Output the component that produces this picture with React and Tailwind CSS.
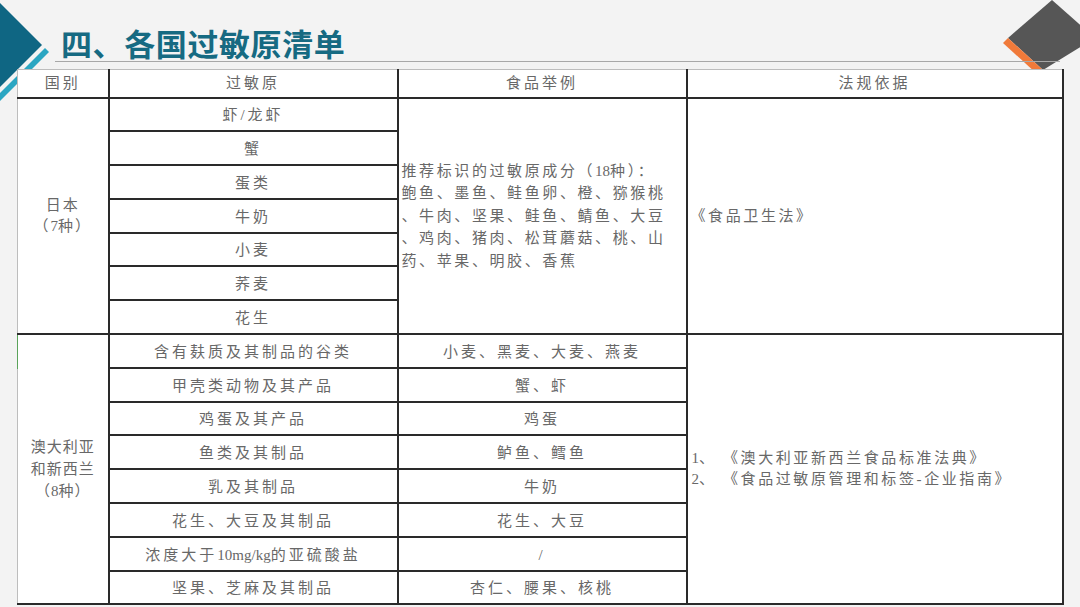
import React from 'react';

const jp = ['虾/龙虾', '蟹', '蛋类', '牛奶', '小麦', '荞麦', '花生'];

const au = [
  ['含有麸质及其制品的谷类', '小麦、黑麦、大麦、燕麦'],
  ['甲壳类动物及其产品', '蟹、虾'],
  ['鸡蛋及其产品', '鸡蛋'],
  ['鱼类及其制品', '鲈鱼、鳕鱼'],
  ['乳及其制品', '牛奶'],
  ['花生、大豆及其制品', '花生、大豆'],
  [<>浓度大于<span className="tracking-normal">10mg/kg</span>的亚硫酸盐</>, '/'],
  ['坚果、芝麻及其制品', '杏仁、腰果、核桃'],
];

const cell = 'border-2 border-[#2a2a2a] text-center align-middle p-0';

export default function App() {
  return (
    <div
      className="relative w-[1080px] h-[607px] overflow-hidden bg-[#f3f3f3]"
      style={{ fontFamily: '"Liberation Serif", "Noto Sans CJK SC", serif' }}
    >
      {/* 左上角装饰 */}
      <svg className="absolute left-0 top-0" width="60" height="110" viewBox="0 0 60 110">
        <polygon points="0,93 45,48 49,52 0,101" fill="#2ba6c2" />
        <polygon points="0,3 42,45 0,87" fill="#0f6683" />
      </svg>
      {/* 右上角装饰 */}
      <svg className="absolute right-0 top-0" width="80" height="75" viewBox="1000 0 80 75">
        <polygon points="1052,0 1095,38 1043,70 1008,38" fill="#565656" />
        <polygon points="1008,38 1043,70 1037,74 1003,43" fill="#f07a3a" />
      </svg>

      {/* 标题 */}
      <div className="relative h-[62px] ml-[55px] w-[1005px] border-b border-[#a8a8a8] flex items-end">
        <h1
          className="ml-[6px] mb-[3px] text-[31px] leading-none font-bold tracking-[0.6px] text-[#166a82]"
          style={{ fontFamily: '"Noto Sans CJK SC", sans-serif' }}
        >
          四、各国过敏原清单
        </h1>
      </div>

      {/* 表格 */}
      <table className="relative mt-[7px] ml-[17px] w-[1045px] border-collapse bg-white text-[15px] text-[#686868] tracking-[3px] table-fixed">
        <colgroup>
          <col className="w-[91px]" />
          <col className="w-[289px]" />
          <col className="w-[289px]" />
          <col className="w-[376px]" />
        </colgroup>
        <tbody>
          <tr className="h-[28px]">
            <td className="border-l border-t border-[#bdbdbd] border-b-2 border-b-[#2a2a2a] border-r-2 border-r-[#2a2a2a] text-center">国别</td>
            <td className={cell + ' border-t-[#bdbdbd] border-t'}>过敏原</td>
            <td className={cell + ' border-t-[#bdbdbd] border-t'}>食品举例</td>
            <td className={cell + ' border-t-[#bdbdbd] border-t'}>法规依据</td>
          </tr>
          {jp.map((a, i) => (
            <tr key={a} className="h-[33.8px]">
              {i === 0 && (
                <td rowSpan={7} className="border-l border-[#bdbdbd] border-r-2 border-r-[#2a2a2a] border-b-2 border-b-[#2a2a2a] text-center leading-[21px] tracking-[2px]">
                  日本
                  <br />（<span className="tracking-normal">7</span>种）
                </td>
              )}
              <td className={cell + ' pt-[2px]'}>{a}</td>
              {i === 0 && (
                <td rowSpan={7} className={cell + ' text-left pl-[3px] tracking-[2.6px] leading-[22.5px]'}>
                  推荐标识的过敏原成分（<span className="tracking-normal">18</span>种）：
                  <br />鲍鱼、墨鱼、鲑鱼卵、橙、猕猴桃
                  <br />、牛肉、坚果、鲑鱼、鲭鱼、大豆
                  <br />、鸡肉、猪肉、松茸蘑菇、桃、山
                  <br />药、苹果、明胶、香蕉
                </td>
              )}
              {i === 0 && (
                <td rowSpan={7} className={cell + ' text-left pl-[3px] tracking-[2.6px]'}>
                  《食品卫生法》
                </td>
              )}
            </tr>
          ))}
          {au.map(([a, f], i) => (
            <tr key={i} className="h-[33.8px]">
              {i === 0 && (
                <td rowSpan={8} className="relative border-l border-[#bdbdbd] border-r-2 border-r-[#2a2a2a] border-b-2 border-b-[#2a2a2a] text-center leading-[22px] tracking-[1px]">
                  <span className="absolute left-[-1px] top-0 h-[34px] w-[1px] bg-[#5aa35a]" />
                  澳大利亚
                  <br />和新西兰
                  <br />（<span className="tracking-normal">8</span>种）
                </td>
              )}
              <td className={cell + ' pt-[2px]'}>{a}</td>
              <td className={cell + ' pt-[2px]'}>{f}</td>
              {i === 0 && (
                <td rowSpan={8} className={cell + ' text-left pl-[4px] tracking-[2.6px] leading-[21px]'}>
                  <span className="tracking-normal">1</span>、 《澳大利亚新西兰食品标准法典》
                  <br /><span className="tracking-normal">2</span>、 《食品过敏原管理和标签-企业指南》
                </td>
              )}
            </tr>
          ))}
        </tbody>
      </table>
    </div>
  );
}
